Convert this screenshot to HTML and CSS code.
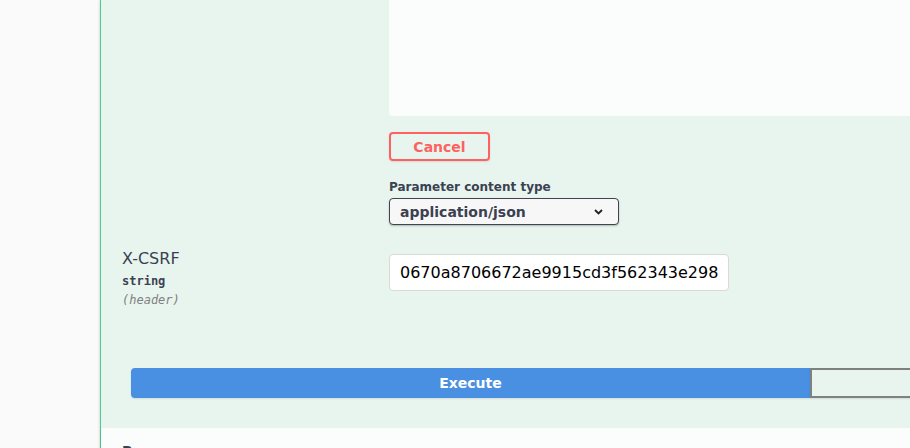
FILE: index.html
```html
<!DOCTYPE html>
<html lang="en">
<head>
<meta charset="utf-8">
<title>Try it out</title>
<link rel="stylesheet" href="styles.css">
</head>
<body>
<div class="opblock">
  <div class="params">
    <div class="param-row first">
      <div class="col-name"></div>
      <div class="col-desc">
        <div class="body-text"></div>
        <button class="btn cancel" type="button">Cancel</button>
        <label class="ct-label">Parameter content type</label>
        <div class="select">
          <span>application/json</span>
          <svg class="chev" width="9" height="6" viewBox="0 0 9 6"><path d="M1 1l3.5 3.5L8 1" fill="none" stroke="#1f2128" stroke-width="1.8"/></svg>
        </div>
      </div>
    </div>
    <div class="param-row second">
      <div class="col-name">
        <div class="p-name">X-CSRF</div>
        <div class="p-type">string</div>
        <div class="p-in">(header)</div>
      </div>
      <div class="col-desc">
        <div class="input">0670a8706672ae9915cd3f562343e298</div>
      </div>
    </div>
  </div>
  <div class="execute-wrapper">
    <div class="btn-group">
      <button class="btn execute" type="button">Execute</button>
      <button class="btn clear" type="button">Clear</button>
    </div>
  </div>
  <div class="section-header">
    <h4>Responses</h4>
  </div>
</div>
</body>
</html>
```

FILE: styles.css
```css
html, body {
  margin: 0;
  padding: 0;
}
body {
  background: #fafafa;
  width: 910px;
  height: 448px;
  overflow: hidden;
  font-family: "DejaVu Sans", sans-serif;
  color: #3b4151;
}
.opblock {
  margin-left: 100px;
  width: 1500px;
  border-left: 1px solid #49cc90;
  background: #e8f5ef;
  box-shadow: 0 0 3px rgba(0, 0, 0, 0.19);
}
.params {
  padding-left: 21px;
}
.param-row {
  display: grid;
  grid-template-columns: 267px 1fr;
}
.col-desc {
  display: flex;
  flex-direction: column;
  align-items: flex-start;
}
.body-text {
  width: 800px;
  height: 116px;
  background: #fafdfc;
  border-radius: 0 0 4px 4px;
}
.btn {
  font-family: "DejaVu Sans", sans-serif;
  font-size: 14px;
  font-weight: 700;
  box-sizing: border-box;
  background: transparent;
  border: 2px solid #808080;
  border-radius: 4px;
  box-shadow: 0 1px 2px rgba(0, 0, 0, 0.1);
  padding: 0;
  cursor: pointer;
}
.cancel {
  margin-top: 16px;
  width: 101px;
  height: 29px;
  border-color: #ff6060;
  color: #ff6060;
}
.ct-label {
  margin-top: 19px;
  font-size: 12px;
  font-weight: 700;
  line-height: 14px;
}
.select {
  margin-top: 4px;
  box-sizing: border-box;
  width: 230px;
  height: 27px;
  display: flex;
  align-items: center;
  justify-content: space-between;
  padding: 0 15px 0 10px;
  background: #f7f7f7;
  border: 1px solid #41444e;
  border-radius: 4px;
  box-shadow: 0 1px 2px rgba(0, 0, 0, 0.25);
  font-size: 14px;
  font-weight: 700;
  color: #3b4151;
}
.chev {
  display: block;
}
.second {
  margin-top: 24px;
}
.p-name {
  font-size: 16px;
  line-height: 19px;
}
.p-type {
  margin-top: 6px;
  font-family: "DejaVu Sans Mono", monospace;
  font-size: 12px;
  font-weight: 700;
  line-height: 14px;
}
.p-in {
  margin-top: 5px;
  font-family: "DejaVu Sans Mono", monospace;
  font-size: 12px;
  font-style: italic;
  line-height: 14px;
  color: #808080;
}
.input {
  margin-top: 5px;
  box-sizing: border-box;
  width: 340px;
  height: 37px;
  padding: 0 10px;
  display: flex;
  align-items: center;
  background: #fff;
  border: 1px solid #d9d9d9;
  border-radius: 4px;
  font-size: 16px;
  color: #000;
}
.execute-wrapper {
  padding: 61px 0 30px 30px;
}
.btn-group {
  display: flex;
  width: 1358px;
}
.btn-group .btn {
  flex: 1;
  height: 30px;
}
.execute {
  background: #4990e2;
  border-color: #4990e2;
  color: #fff;
  border-radius: 4px 0 0 4px;
}
.clear {
  border-radius: 0 4px 4px 0;
  color: #3b4151;
}
.section-header {
  background: #fafdfb;
  box-shadow: 0 1px 2px rgba(0, 0, 0, 0.1);
  padding: 15px 20px 8px 21px;
}
.section-header h4 {
  margin: 0;
  font-size: 14px;
  line-height: 16px;
  font-weight: 700;
}
```
